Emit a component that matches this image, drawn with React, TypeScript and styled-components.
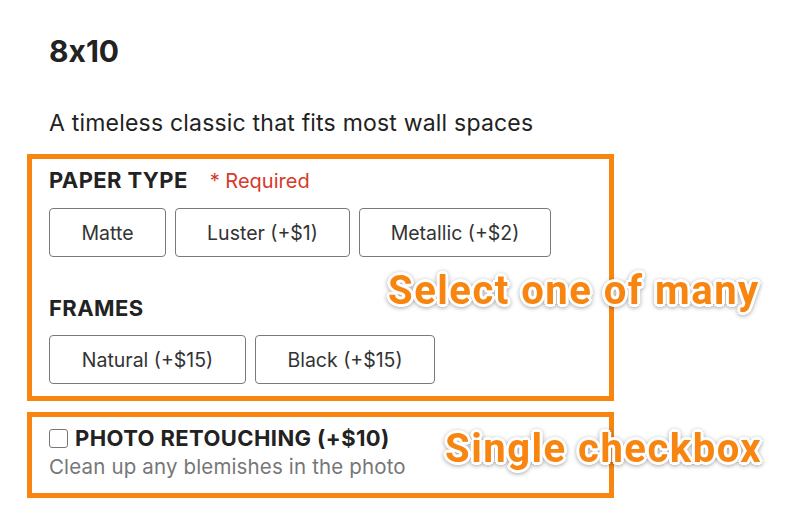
import React from "react";
import styled, { createGlobalStyle } from "styled-components";

const Global = createGlobalStyle`
  html, body { margin: 0; padding: 0; background: #ffffff; }
  body {
    font-family: Inter, "Open Sans", "Liberation Sans", sans-serif;
    color: #222;
    font-feature-settings: "calt" 0;
  }
  * { box-sizing: border-box; }
`;

const ORANGE = "#f7850f";

const Page = styled.div`
  position: relative;
  width: 800px;
  height: 522px;
  padding: 33px 0 0 27px;
  overflow: hidden;
`;

const Title = styled.h1`
  margin: 0 0 0 22px;
  font-size: 30px;
  line-height: 36px;
  font-weight: 700;
  color: #222;
  font-feature-settings: "calt" 0;
`;

const Description = styled.p`
  margin: 40px 0 17px 22px;
  font-size: 23px;
  line-height: 28px;
  letter-spacing: 0.2px;
  color: #222;
`;

const Highlight = styled.div<{ $pt: number; $pb: number; $mt?: number }>`
  width: 587px;
  border: 5px solid ${ORANGE};
  padding: ${(p) => p.$pt}px 16px ${(p) => p.$pb}px 17px;
  margin-top: ${(p) => p.$mt ?? 0}px;
  display: flex;
  flex-direction: column;
`;

const LabelRow = styled.div<{ $mt?: number }>`
  display: flex;
  align-items: baseline;
  gap: 22px;
  margin-top: ${(p) => p.$mt ?? 0}px;
  line-height: 24px;
`;

const Label = styled.span`
  font-size: 22px;
  font-weight: 700;
  color: #222;
  letter-spacing: 0.4px;
`;

const Required = styled.span`
  font-size: 20px;
  color: #d63a2b;
`;

const Options = styled.div`
  display: flex;
  gap: 9px;
  margin-top: 15px;
`;

const Option = styled.button<{ $w: number }>`
  width: ${(p) => p.$w}px;
  height: 49px;
  border: 1.5px solid #7a7a7a;
  border-radius: 4px;
  background: #fff;
  font-family: inherit;
  font-size: 19.5px;
  color: #333;
  padding: 0;
`;

const CheckRow = styled.label`
  display: flex;
  align-items: center;
  gap: 7px;
  line-height: 24px;
`;

const Box = styled.span`
  width: 19px;
  height: 19px;
  border: 1.5px solid #777;
  border-radius: 3px;
  background: #fff;
  flex: none;
`;

const Hint = styled.div`
  margin-top: 5px;
  font-size: 20.5px;
  line-height: 24px;
  letter-spacing: 0.15px;
  color: #777;
`;

const Annotation = styled.div<{ $x: number; $y: number }>`
  position: absolute;
  left: ${(p) => p.$x}px;
  top: ${(p) => p.$y}px;
  font-family: Roboto, Inter, "Liberation Sans", sans-serif;
  font-size: 40px;
  font-weight: 700;
  line-height: 46px;
  letter-spacing: 1.5px;
  color: ${ORANGE};
  white-space: nowrap;
  text-shadow:
    3px 0 0 #fff, -3px 0 0 #fff, 0 3px 0 #fff, 0 -3px 0 #fff,
    2px 2px 0 #fff, -2px -2px 0 #fff, 2px -2px 0 #fff, -2px 2px 0 #fff;
  filter: drop-shadow(0 1px 2px rgba(0, 0, 0, 0.35));
`;

export default function App() {
  return (
    <>
      <Global />
      <Page>
        <Title>8x10</Title>
        <Description>A timeless classic that fits most wall spaces</Description>
        <Highlight $pt={9} $pb={12}>
          <LabelRow>
            <Label>PAPER TYPE</Label>
            <Required>* Required</Required>
          </LabelRow>
          <Options>
            <Option $w={117}>Matte</Option>
            <Option $w={175}>Luster (+$1)</Option>
            <Option $w={192}>Metallic (+$2)</Option>
          </Options>
          <LabelRow $mt={39}>
            <Label>FRAMES</Label>
          </LabelRow>
          <Options>
            <Option $w={197}>Natural (+$15)</Option>
            <Option $w={180}>Black (+$15)</Option>
          </Options>
        </Highlight>
        <Highlight $pt={9} $pb={14} $mt={11}>
          <CheckRow>
            <Box />
            <Label>PHOTO RETOUCHING (+$10)</Label>
          </CheckRow>
          <Hint>Clean up any blemishes in the photo</Hint>
        </Highlight>
        <Annotation $x={388} $y={268}>Select one of many</Annotation>
        <Annotation $x={445} $y={426}>Single checkbox</Annotation>
      </Page>
    </>
  );
}
